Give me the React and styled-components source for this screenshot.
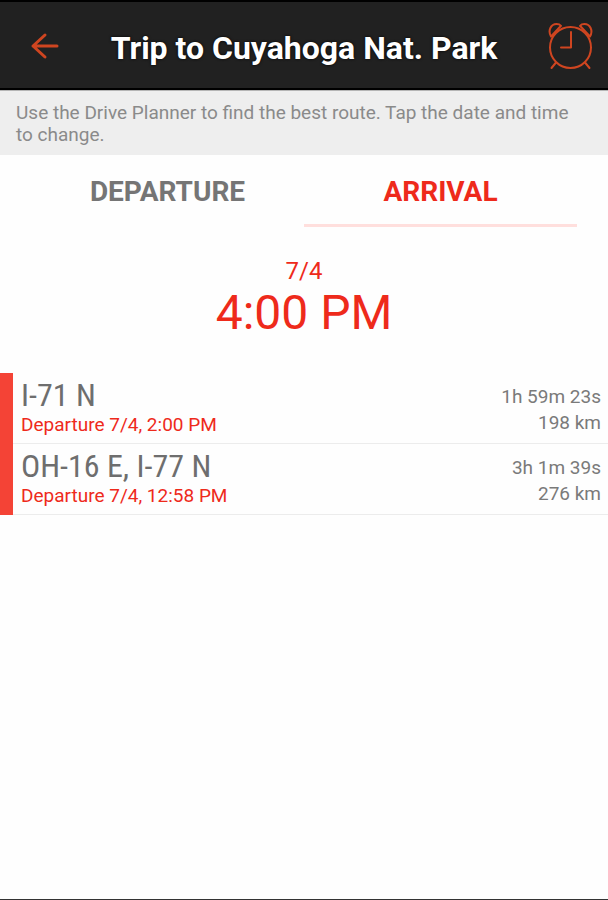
import React, { useState } from "react";
import styled, { createGlobalStyle } from "styled-components";

const routes = [
  { name: "I-71 N", departure: "7/4, 2:00 PM", duration: "1h 59m 23s", distance: "198 km" },
  { name: "OH-16 E, I-77 N", departure: "7/4, 12:58 PM", duration: "3h 1m 39s", distance: "276 km" },
];

const tabs = ["Departure", "Arrival"];

export default function App() {
  const [activeTab, setActiveTab] = useState("Arrival");

  return (
    <Screen>
      <GlobalStyle />
      <Header>
        <IconButton aria-label="Back">
          <BackArrow width="30" height="30" viewBox="0 0 30 30">
            <path d="M15 4 3 15l12 11M3 15H27" />
          </BackArrow>
        </IconButton>
        <h1>Trip to Cuyahoga Nat. Park</h1>
        <IconButton aria-label="Alarm">
          <AlarmClock width="46" height="48" viewBox="0 0 46 48">
            <circle cx="22.5" cy="25.5" r="20.5" />
            <path d="M23 10v15.5H13" />
            <path d="M8 40.5 3.5 46M37 40.5 41.5 46" />
            <path d="M3 14.5C-.5 8.5 3 2 8.5 2c2 0 3.500.6 4.500 1.800L3 14.5Z" />
            <path d="M42 14.5C45.500 8.5 42 2 36.500 2c-2 0-3.500.6-4.500 1.800L42 14.5Z" />
          </AlarmClock>
        </IconButton>
      </Header>
      <Hint>
        Use the Drive Planner to find the best route. Tap the date and time to change.
      </Hint>
      <Tabs role="tablist">
        {tabs.map((tab) => (
          <Tab
            key={tab}
            role="tab"
            aria-selected={tab === activeTab}
            $active={tab === activeTab}
            onClick={() => setActiveTab(tab)}
          >
            {tab}
          </Tab>
        ))}
      </Tabs>
      <DateTime>
        <DateButton>7/4</DateButton>
        <TimeButton>4:00 PM</TimeButton>
      </DateTime>
      <RouteList>
        {routes.map(({ name, departure, duration, distance }) => (
          <Route key={name}>
            <div>
              <RouteName>{name}</RouteName>
              <RouteDeparture>Departure {departure}</RouteDeparture>
            </div>
            <RouteMeta>
              <span>{duration}</span>
              <span>{distance}</span>
            </RouteMeta>
          </Route>
        ))}
      </RouteList>
    </Screen>
  );
}

const GlobalStyle = createGlobalStyle`
  * {
    box-sizing: border-box;
  }
  body {
    margin: 0;
    background: #fefefe;
    font-family: Roboto, sans-serif;
  }
  button {
    padding: 0;
    border: none;
    background: transparent;
    font: inherit;
    color: inherit;
    cursor: pointer;
  }
`;

const Screen = styled.main`
  display: flex;
  flex-direction: column;
  min-height: 100vh;
  border-bottom: 1px solid #333;
`;

const Header = styled.header`
  display: flex;
  align-items: center;
  justify-content: space-between;
  padding: 20px 14px 18px 30px;
  background: #212121;
  border-top: 2px solid #000;
  border-bottom: 2px solid #000;
  h1 {
    margin: 0;
    padding-top: 4px;
    color: #fff;
    font-size: 32px;
    line-height: 40px;
    font-weight: 700;
    text-align: center;
    text-shadow: 0 0 3px #000;
  }
`;

const IconButton = styled.button`
  display: flex;
  svg {
    fill: none;
    stroke: #cf4520;
    stroke-linecap: round;
    stroke-linejoin: round;
  }
`;

const BackArrow = styled.svg`
  stroke-width: 3;
`;

const AlarmClock = styled.svg`
  stroke-width: 2;
`;

const Hint = styled.p`
  margin: 0;
  padding: 11px 24px 9px 16px;
  background: #eee;
  border-top: 1px solid #b5b5b5;
  color: #8a8a8a;
  font-size: 19px;
  line-height: 22px;
`;

const Tabs = styled.div`
  display: flex;
  padding: 0 31px;
`;

const Tab = styled.button`
  && {
    flex: 1;
    padding: 17px 0 12px;
    border-bottom: 3px solid ${({ $active }) => ($active ? "#ffdfdd" : "transparent")};
    color: ${({ $active }) => ($active ? "#ee2a1b" : "#757575")};
    font-size: 28px;
    line-height: 40px;
    font-weight: 700;
    text-transform: uppercase;
  }
`;

const DateTime = styled.div`
  display: flex;
  flex-direction: column;
  align-items: center;
  padding: 30px 0 32px;
  color: #ee2a1b;
`;

const DateButton = styled.button`
  && {
    font-size: 24px;
    line-height: 28px;
  }
`;

const TimeButton = styled.button`
  && {
    font-size: 48px;
    line-height: 56px;
  }
`;

const RouteList = styled.ul`
  margin: 0;
  padding: 0;
  list-style: none;
  border-left: 13px solid #f44336;
`;

const Route = styled.li`
  display: flex;
  justify-content: space-between;
  padding: 3px 7px 7px 8px;
  border-bottom: 1px solid #ececec;
`;

const RouteName = styled.div`
  color: #6e6e6e;
  font-family: "Roboto Condensed", Roboto, sans-serif;
  font-size: 32px;
  line-height: 38px;
`;

const RouteDeparture = styled.div`
  color: #ee2a1b;
  font-size: 19px;
  line-height: 22px;
`;

const RouteMeta = styled.div`
  display: flex;
  flex-direction: column;
  padding-top: 8px;
  color: #7a7a7a;
  font-size: 19px;
  line-height: 26px;
  text-align: right;
`;
